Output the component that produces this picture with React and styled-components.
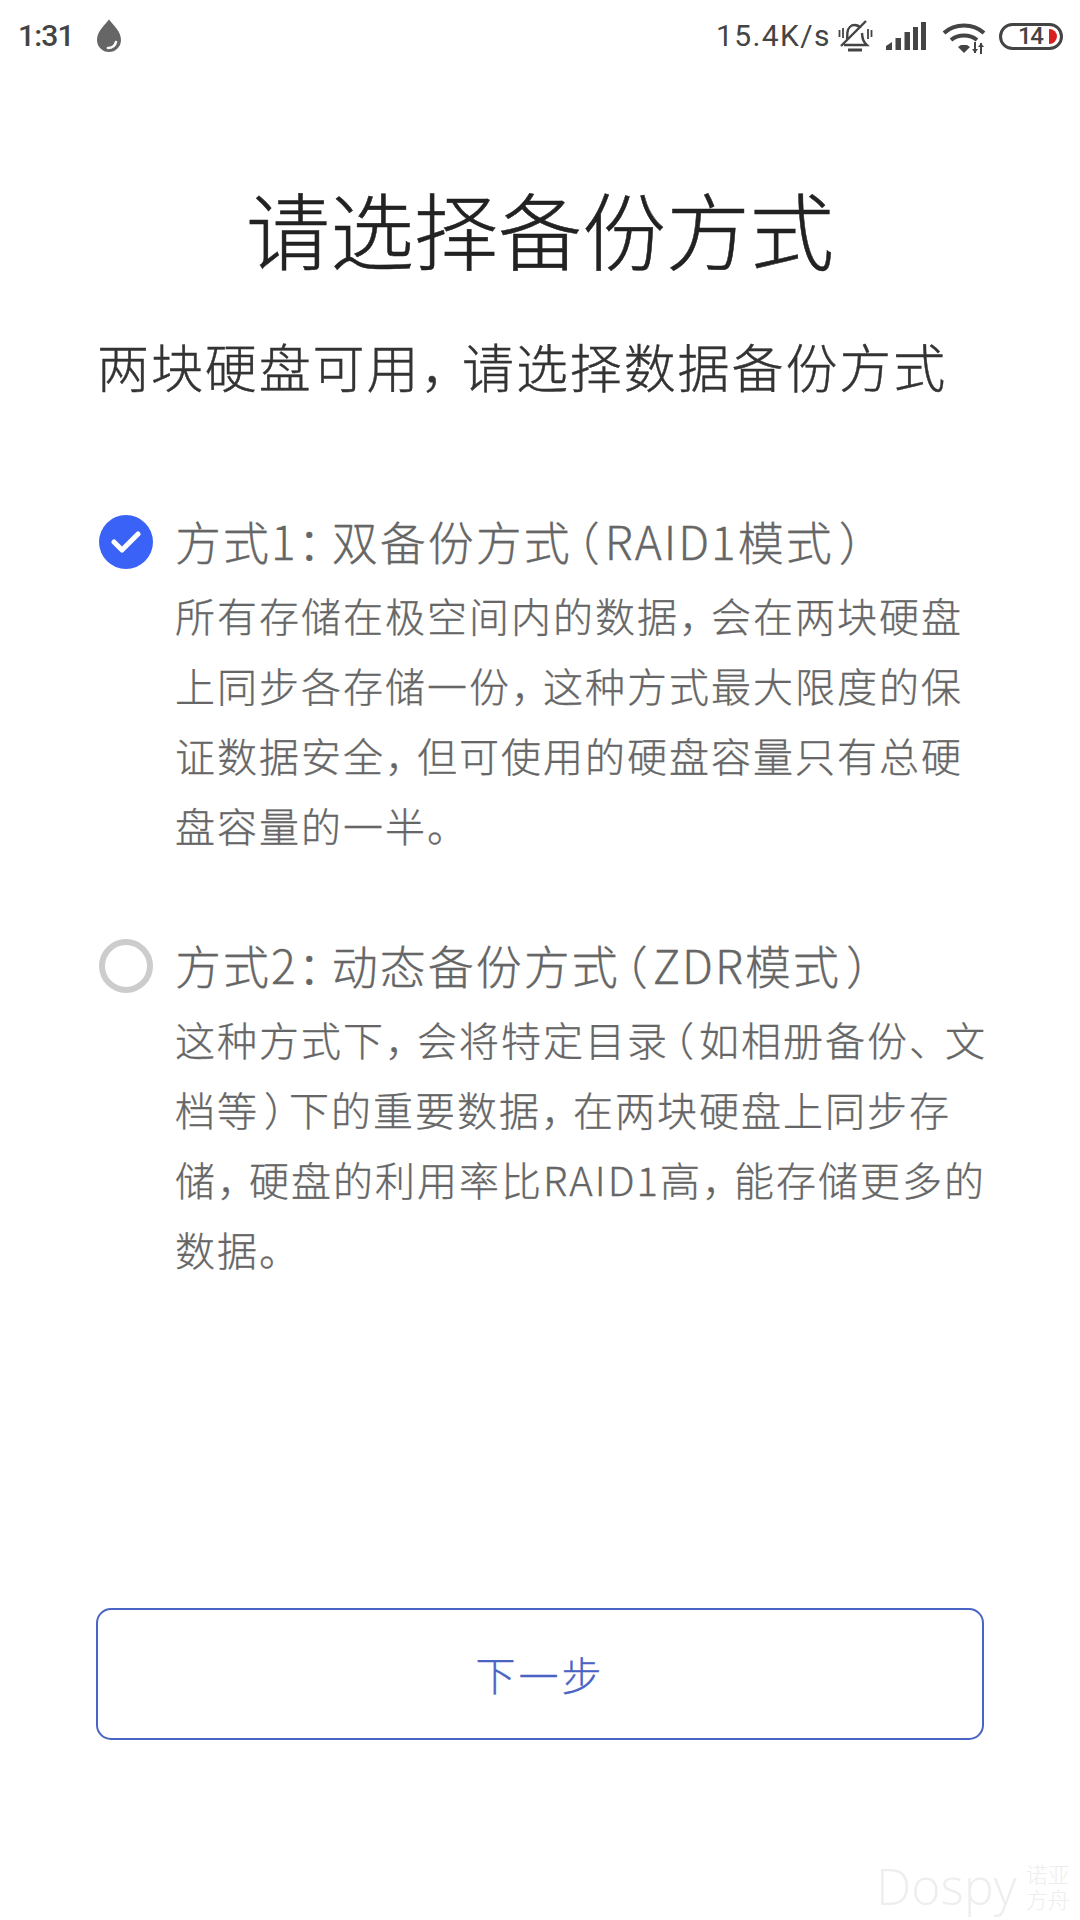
import styled, { createGlobalStyle } from "styled-components";

const GlobalStyle = createGlobalStyle`
  html, body {
    margin: 0;
    padding: 0;
    background: #fff;
  }
  body {
    font-family: "Noto Sans CJK SC", "Noto Sans", sans-serif;
  }
`;

const options = [
  {
    id: 1,
    checked: true,
    title: "方式1：双备份方式（RAID1模式）",
    lines: [
      "所有存储在极空间内的数据，会在两块硬盘",
      "上同步各存储一份，这种方式最大限度的保",
      "证数据安全，但可使用的硬盘容量只有总硬",
      "盘容量的一半。",
    ],
  },
  {
    id: 2,
    checked: false,
    title: "方式2：动态备份方式（ZDR模式）",
    lines: [
      "这种方式下，会将特定目录（如相册备份、文",
      "档等）下的重要数据，在两块硬盘上同步存",
      "储，硬盘的利用率比RAID1高，能存储更多的",
      "数据。",
    ],
  },
];

// the screenshot's font sets punctuation narrower than a full em
const punctSpacing = { "，": "-0.2em", "：": "-0.26em", "、": "-0.1em" };

const withPunct = text =>
  text.split(/([，：、（）])/).map((part, i) => {
    if (part === "（" || part === "）") return <Paren key={i}>{part}</Paren>;
    if (punctSpacing[part]) {
      return (
        <Punct key={i} $spacing={punctSpacing[part]}>
          {part}
        </Punct>
      );
    }
    return part;
  });

const App = () => {
  return (
    <Page>
      <GlobalStyle />
      <StatusBar>
        <StatusGroup>
          <Time>1:31</Time>
          <DropIcon />
        </StatusGroup>
        <StatusGroup>
          <Speed>15.4K/s</Speed>
          <BellIcon />
          <SignalIcon />
          <WifiIcon />
          <Battery>
            <BatteryText>14</BatteryText>
            <BatteryCap />
          </Battery>
        </StatusGroup>
      </StatusBar>

      <Title>请选择备份方式</Title>
      <Subtitle>{withPunct("两块硬盘可用，请选择数据备份方式")}</Subtitle>

      <OptionList>
        {options.map(option => (
          <Option key={option.id}>
            <Radio $checked={option.checked}>
              {option.checked && <CheckIcon />}
            </Radio>
            <OptionBody>
              <OptionTitle>{withPunct(option.title)}</OptionTitle>
              {option.lines.map(line => (
                <OptionLine key={line}>{withPunct(line)}</OptionLine>
              ))}
            </OptionBody>
          </Option>
        ))}
      </OptionList>

      <NextButton>下一步</NextButton>

      <Watermark>
        <WatermarkName>Dospy</WatermarkName>
        <WatermarkCn>
          <span>诺亚</span>
          <span>方舟</span>
        </WatermarkCn>
      </Watermark>
    </Page>
  );
};

export default App;

const DropIcon = () => (
  <DropSvg viewBox="0 0 26 34">
    <path
      d="M13 0.5C9 6 1 12 1 21a12 12 0 0 0 24 0C25 12 17 6 13 0.5z"
      fill="#666"
    />
    <path
      d="M12 29c4 0 7-2 8-6"
      fill="none"
      stroke="#fff"
      strokeWidth="2.6"
      strokeLinecap="round"
    />
  </DropSvg>
);

const BellIcon = () => (
  <BellSvg viewBox="0 0 35 32" fill="none" stroke="#444" strokeWidth="2.4">
    <path d="M9 19c0.5-2 0-4 0.5-7 0.6-4 3.5-7 7-7 2.5 0 4.5 1 6 3" />
    <path d="M24 13c0.5 4 0 7 3 10l2 2H6" />
    <path d="M10 30h14" strokeWidth="3" />
    <path d="M3 26L28 1" />
    <path d="M1.5 10v7M5 8v10M30 9v10M33.5 10v7" strokeWidth="1.8" />
  </BellSvg>
);

const SignalIcon = () => (
  <SignalSvg viewBox="0 0 40 28" fill="#444">
    <path d="M0 24l6-4v8H0z" />
    <rect x="9.5" y="16" width="5.5" height="12" />
    <rect x="18.5" y="10" width="5.5" height="18" />
    <rect x="27" y="5" width="5" height="23" />
    <rect x="35" y="0" width="5" height="28" />
  </SignalSvg>
);

const WifiIcon = () => (
  <WifiSvg viewBox="0 0 44 32" fill="none" stroke="#444">
    <path d="M2 11c11-10 29-10 40 0" strokeWidth="4" />
    <path d="M9 18c7-6 19-6 26 0" strokeWidth="4" />
    <path d="M16 25l3-2h6l3 2-6 6z" fill="#444" stroke="none" />
    <path d="M33 20v11M39 21v11" strokeWidth="2" />
    <path d="M30 27l3 4 3-4z M36 25l3-4 3 4z" fill="#444" stroke="none" />
  </WifiSvg>
);

const CheckIcon = () => (
  <CheckSvg viewBox="0 0 30 24" fill="none">
    <path
      d="M3 12l8 8L27 4"
      stroke="#fff"
      strokeWidth="5"
      strokeLinecap="round"
      strokeLinejoin="round"
    />
  </CheckSvg>
);

const Page = styled.div`
  position: relative;
  width: 1080px;
  height: 1920px;
  overflow: hidden;
  display: flex;
  flex-direction: column;
  background: #fff;
`;

const StatusBar = styled.div`
  height: 72px;
  padding: 0 17px 0 18px;
  display: flex;
  align-items: center;
  justify-content: space-between;
  color: #444;
  font-family: Roboto, "Noto Sans", sans-serif;
`;

const StatusGroup = styled.div`
  display: flex;
  align-items: center;
`;

const Time = styled.span`
  font-size: 30px;
  line-height: 36px;
  font-weight: 500;
  letter-spacing: -0.8px;
`;

const DropSvg = styled.svg`
  width: 26px;
  height: 34px;
  margin-left: 22px;
`;

const Speed = styled.span`
  font-size: 30px;
  line-height: 36px;
  letter-spacing: 1.4px;
`;

const BellSvg = styled.svg`
  width: 35px;
  height: 32px;
  margin-left: 7px;
`;

const SignalSvg = styled.svg`
  width: 40px;
  height: 28px;
  margin-left: 13px;
`;

const WifiSvg = styled.svg`
  width: 44px;
  height: 32px;
  margin-left: 16px;
  margin-top: 4px;
`;

const Battery = styled.div`
  position: relative;
  width: 64px;
  height: 27px;
  margin-left: 13px;
  box-sizing: border-box;
  border: 3px solid #444;
  border-radius: 14px;
  display: flex;
  align-items: center;
  padding-left: 16px;
`;

const BatteryText = styled.span`
  font-size: 24px;
  line-height: 21px;
  font-weight: 500;
  letter-spacing: -1.5px;
`;

const BatteryCap = styled.div`
  position: absolute;
  right: 3px;
  top: 3px;
  width: 8px;
  height: 15px;
  background: #d8201f;
  border-radius: 0 8px 8px 0;
`;

const Title = styled.h1`
  margin: 106px 0 2px;
  font-size: 84px;
  line-height: 100px;
  font-weight: 300;
  -webkit-text-stroke: 0.5px #222;
  text-align: center;
  color: #222;
`;

const Subtitle = styled.p`
  margin: 51px 0 0 97px;
  font-size: 52px;
  line-height: 70px;
  font-weight: 300;
  -webkit-text-stroke: 0.4px #333;
  letter-spacing: 1.9px;
  color: #333;
  white-space: nowrap;
`;

const OptionList = styled.div`
  margin: 107px 0 0 99px;
  display: flex;
  flex-direction: column;
  gap: 72px;
`;

const Option = styled.div`
  display: flex;
  gap: 22px;
`;

const Radio = styled.div`
  width: 54px;
  height: 54px;
  margin-top: 7px;
  flex: none;
  box-sizing: border-box;
  border-radius: 50%;
  border: ${({ $checked }) => ($checked ? "none" : "6px solid #ccc")};
  background: ${({ $checked }) => ($checked ? "#3b62f6" : "#fff")};
  display: flex;
  align-items: center;
  justify-content: center;
`;

const CheckSvg = styled.svg`
  width: 30px;
  height: 24px;
`;

const OptionBody = styled.div`
  display: flex;
  flex-direction: column;
`;

const OptionTitle = styled.div`
  font-size: 46px;
  line-height: 64px;
  margin-bottom: 8px;
  font-weight: 300;
  -webkit-text-stroke: 0.3px #666;
  letter-spacing: 2px;
  color: #666;
  white-space: nowrap;
`;

const OptionLine = styled.div`
  font-size: 40px;
  line-height: 70px;
  font-weight: 300;
  -webkit-text-stroke: 0.3px #666;
  letter-spacing: 2px;
  color: #666;
  white-space: nowrap;
`;

const Punct = styled.span`
  letter-spacing: ${({ $spacing }) => $spacing};
`;

const Paren = styled.span`
  font-feature-settings: "halt";
  margin-left: 5px;
  letter-spacing: 5px;
`;

const NextButton = styled.button`
  margin: auto 96px 180px;
  height: 132px;
  box-sizing: border-box;
  background: #fff;
  border: 2px solid #4a64c4;
  border-radius: 15px;
  color: #4a64c4;
  font-family: inherit;
  font-size: 40px;
  font-weight: 300;
  -webkit-text-stroke: 0.3px #4a64c4;
  letter-spacing: 3px;
`;

const Watermark = styled.div`
  position: absolute;
  left: 876px;
  top: 1856px;
  display: flex;
  align-items: center;
  gap: 9px;
  color: #eee;
  white-space: nowrap;
`;

const WatermarkName = styled.span`
  font-family: "Open Sans", sans-serif;
  font-size: 50px;
  line-height: 60px;
  font-weight: 300;
`;

const WatermarkCn = styled.div`
  display: flex;
  flex-direction: column;
  font-size: 22px;
  line-height: 25px;
  font-weight: 300;
`;
